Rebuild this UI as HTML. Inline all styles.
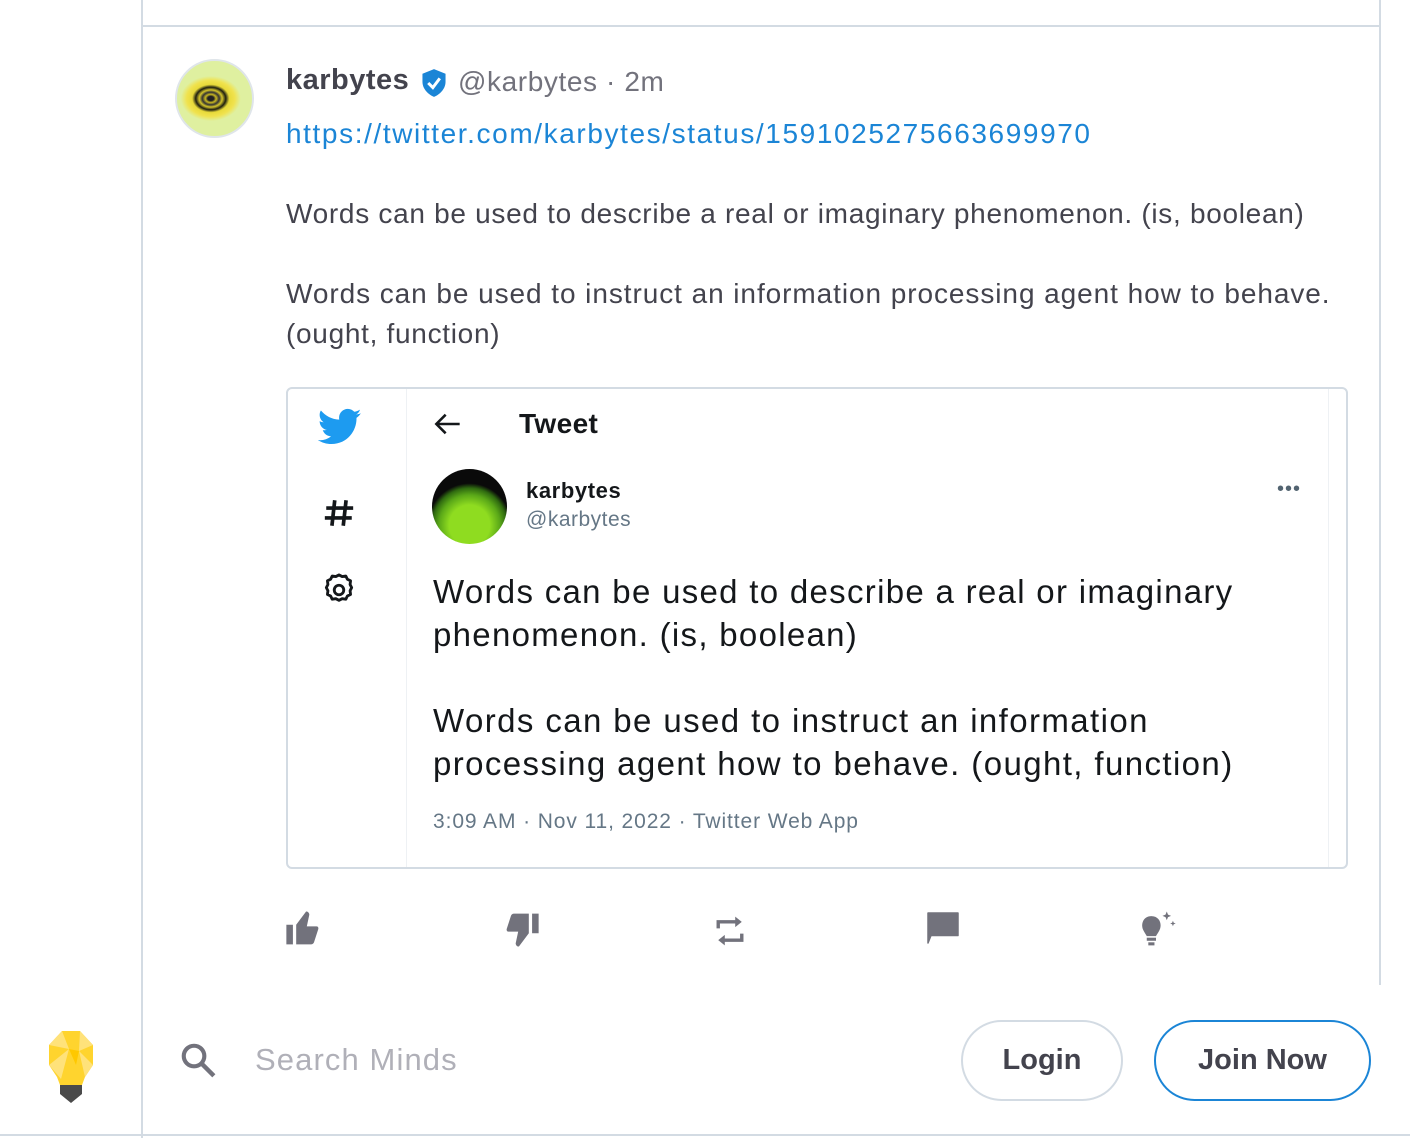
<!DOCTYPE html>
<html><head><meta charset="utf-8"><style>
*{margin:0;padding:0;box-sizing:border-box}
body{width:1410px;height:1138px;background:#fff;position:relative;overflow:hidden;font-family:"Liberation Sans",sans-serif;color:#43434d}
.a{position:absolute;white-space:nowrap}
.ln{position:absolute;background:#d3dbe3}
</style></head><body>
<div class="ln" style="left:141px;top:0;width:2px;height:1138px"></div>
<div class="ln" style="left:1379px;top:0;width:2px;height:985px"></div>
<div class="ln" style="left:141px;top:25px;width:1240px;height:2px"></div>
<div class="ln" style="left:0;top:1134px;width:1410px;height:2px"></div>

<div class="a" style="left:175px;top:59px;width:79px;height:79px;border-radius:50%;background:radial-gradient(ellipse 40% 30% at 45% 50%,#222 0 10%,#c9b820 18%,#333 28%,#d5c52a 38%,#1e1e10 50%,#e8da3a 62%,#f0e24e 80%,#dff0a0 100%),radial-gradient(circle,#f0e24e 0 50%,#bfe8d8 80%,#cdeee4 100%);border:2px solid #dfe5ea"></div>
<div class="a" style="left:286px;top:64px;font-size:29px;font-weight:bold;color:#43434d;letter-spacing:0.5px">karbytes</div>
<svg class="a" style="left:420px;top:68px" width="28" height="30" viewBox="0 0 24 26"><path d="M12 1 L22 5 V12 C22 18 17 23 12 25 C7 23 2 18 2 12 V5 Z" fill="#1b85d6"/><path d="M7 13 L11 17 L17 9" stroke="#fff" stroke-width="2.6" fill="none"/></svg>
<div class="a" style="left:458px;top:66px;font-size:28px;color:#72727c;letter-spacing:0.6px">@karbytes · 2m</div>
<div class="a" style="left:286px;top:118px;font-size:28px;color:#1b85d6;letter-spacing:1.6px">https://twitter.com/karbytes/status/1591025275663699970</div>
<div class="a" style="left:286px;top:198px;font-size:28px;letter-spacing:0.7px">Words can be used to describe a real or imaginary phenomenon. (is, boolean)</div>
<div class="a" style="left:286px;top:278px;font-size:28px;letter-spacing:0.93px">Words can be used to instruct an information processing agent how to behave.</div>
<div class="a" style="left:286px;top:318px;font-size:28px;letter-spacing:0.7px">(ought, function)</div>

<div class="a" style="left:286px;top:387px;width:1062px;height:482px;border:2px solid #d3dbe3;border-radius:6px"></div>
<div class="ln" style="left:406px;top:389px;width:1px;height:478px;background:#eef1f4"></div>
<div class="ln" style="left:1328px;top:389px;width:1px;height:478px;background:#eef1f4"></div>
<svg class="a" style="left:318px;top:408px" width="44" height="38" viewBox="0 0 24 20"><path d="M23.6 2.4c-.9.4-1.8.6-2.8.8 1-.6 1.8-1.6 2.100-2.7-.9.6-2 1-3.1 1.2C18.9.7 17.6.1 16.3.1c-2.7 0-4.800 2.2-4.800 4.800 0 .4 0 .8.1 1.1C7.5 5.800 4 3.900 1.600 1 1.100 1.700.9 2.500.9 3.400c0 1.700.9 3.200 2.200 4-.8 0-1.500-.2-2.200-.6v.1c0 2.300 1.700 4.300 3.900 4.700-.4.1-.8.2-1.300.2-.3 0-.6 0-.9-.1.6 1.900 2.400 3.300 4.500 3.400-1.700 1.300-3.700 2.100-6 2.100-.4 0-.8 0-1.200-.1 2.100 1.400 4.700 2.200 7.400 2.200 8.900 0 13.700-7.400 13.700-13.700v-.6c1-.7 1.800-1.500 2.400-2.500z" fill="#1d9bf0"/></svg>
<svg class="a" style="left:322px;top:496px" width="34" height="34" viewBox="0 0 24 24"><path d="M9 3L7 21M17 3l-2 18M3 8.5h19M2 15.5h19" stroke="#14171a" stroke-width="2.6" fill="none"/></svg>
<svg class="a" style="left:320px;top:571px" width="38" height="38" viewBox="0 0 24 24"><path d="M12 2.5l2 1 2.3-.3 1 2 2 1-.3 2.300 1 2-1 2 .3 2.300-2 1-1 2-2.300-.3-2 1-2-1-2.300.3-1-2-2-1 .3-2.300-1-2 1-2-.3-2.300 2-1 1-2 2.300.3z" fill="none" stroke="#14171a" stroke-width="1.8" stroke-linejoin="round"/><circle cx="12" cy="12" r="3" fill="none" stroke="#14171a" stroke-width="1.8"/></svg>
<svg class="a" style="left:434px;top:412px" width="28" height="24" viewBox="0 0 24 20"><path d="M22 10H3M10 2L2 10l8 8" fill="none" stroke="#14171a" stroke-width="2.2"/></svg>
<div class="a" style="left:519px;top:408px;font-size:28px;font-weight:bold;color:#14171a;letter-spacing:0.4px">Tweet</div>
<div class="a" style="left:432px;top:469px;width:75px;height:75px;border-radius:50%;background:radial-gradient(circle at 50% 75%,#8fdc20 0 30%,#5aa818 45%,#2f6a10 55%,#0a0a0a 62%);overflow:hidden"></div>
<div class="a" style="left:526px;top:478px;font-size:22px;font-weight:bold;color:#14171a;letter-spacing:0.6px">karbytes</div>
<div class="a" style="left:526px;top:508px;font-size:21px;color:#657786;letter-spacing:0.5px">@karbytes</div>
<div class="a" style="left:1277px;top:478px;font-size:20px;color:#536471;letter-spacing:1px">•••</div>
<div class="a" style="left:433px;top:570px;font-size:33px;color:#14171a;line-height:43px;letter-spacing:1.3px">Words can be used to describe a real or imaginary<br>phenomenon. (is, boolean)</div>
<div class="a" style="left:433px;top:699px;font-size:33px;color:#14171a;line-height:43px;letter-spacing:1.4px">Words can be used to instruct an information<br>processing agent how to behave. (ought, function)</div>
<div class="a" style="left:433px;top:810px;font-size:21px;color:#657786;letter-spacing:0.9px">3:09 AM · Nov 11, 2022 · Twitter Web App</div>

<svg class="a" style="left:286px;top:910px" width="40" height="36" viewBox="0 0 24 22"><path d="M0 9h4v12H0zM6 21h9c1 0 1.600-.6 1.900-1.300l2.600-8c.2-.6 0-1.700-1-1.700h-6L14 3c.2-1-1-2.500-2-2L6 9z" fill="#72727c"/></svg>
<svg class="a" style="left:499px;top:912px" width="40" height="36" viewBox="0 0 24 22"><g transform="rotate(180 12 11)"><path d="M0 9h4v12H0zM6 21h9c1 0 1.600-.6 1.900-1.300l2.600-8c.2-.6 0-1.700-1-1.700h-6L14 3c.2-1-1-2.500-2-2L6 9z" fill="#72727c"/></g></svg>
<svg class="a" style="left:714px;top:914px" width="32" height="34" viewBox="0 0 24 26"><path d="M3 11V6h14" fill="none" stroke="#72727c" stroke-width="2.6"/><path d="M16 2l5 4-5 4z" fill="#72727c"/><path d="M21 15v5H7" fill="none" stroke="#72727c" stroke-width="2.6"/><path d="M8 16l-5 4 5 4z" fill="#72727c"/></svg>
<svg class="a" style="left:925px;top:910px" width="36" height="36" viewBox="0 0 24 24"><path d="M2 2h20v15H4l-2 5z" fill="#72727c" stroke="#72727c" stroke-linejoin="round"/></svg>
<svg class="a" style="left:1135px;top:910px" width="42" height="40" viewBox="0 0 26 26"><path d="M10 4c-4 0-6 3-6 6 0 3 2 5 3 7h6c1-2 3-4 3-7 0-3-2-6-6-6z" fill="#72727c"/><rect x="7" y="18" width="6" height="2" fill="#72727c"/><rect x="8" y="21" width="4" height="2" fill="#72727c"/><path d="M20 1l.8 2 2 .8-2 .8-.8 2-.8-2-2-.8 2-.8zM24 7l.5 1.300 1.300.5-1.300.5-.5 1.300-.5-1.300-1.300-.5 1.300-.5z" fill="#72727c"/></svg>

<svg class="a" style="left:48px;top:1031px" width="46" height="73" viewBox="0 0 46 73"><path d="M14 0h18l13 14v20l-8 12-3 8H12l-3-8-8-12V14z" fill="#ffd42e"/><path d="M14 0l7 18L1 14zM32 0l13 14-14 6zM1 34l20-16-8 30zM45 34L31 20l6 26z" fill="#ffe27a"/><path d="M21 18l10 2-3 14z" fill="#ffc800"/><path d="M12 54h22v9l-11 9-11-9z" fill="#4a4a4a"/></svg>
<svg class="a" style="left:179px;top:1041px" width="38" height="38" viewBox="0 0 24 24"><circle cx="9.500" cy="9.500" r="6.500" fill="none" stroke="#72727c" stroke-width="2.600"/><path d="M14.500 14.500L22 22" stroke="#72727c" stroke-width="2.800"/></svg>
<div class="a" style="left:255px;top:1042px;font-size:31px;color:#b0b0b8;letter-spacing:1.1px">Search Minds</div>
<div class="a" style="left:961px;top:1020px;width:162px;height:81px;border:2px solid #d3dbe3;border-radius:41px;font-size:29px;font-weight:bold;text-align:center;line-height:77px;color:#43434d">Login</div>
<div class="a" style="left:1154px;top:1020px;width:217px;height:81px;border:2px solid #1b85d6;border-radius:41px;font-size:29px;font-weight:bold;text-align:center;line-height:77px;color:#43434d">Join Now</div>
</body></html>
